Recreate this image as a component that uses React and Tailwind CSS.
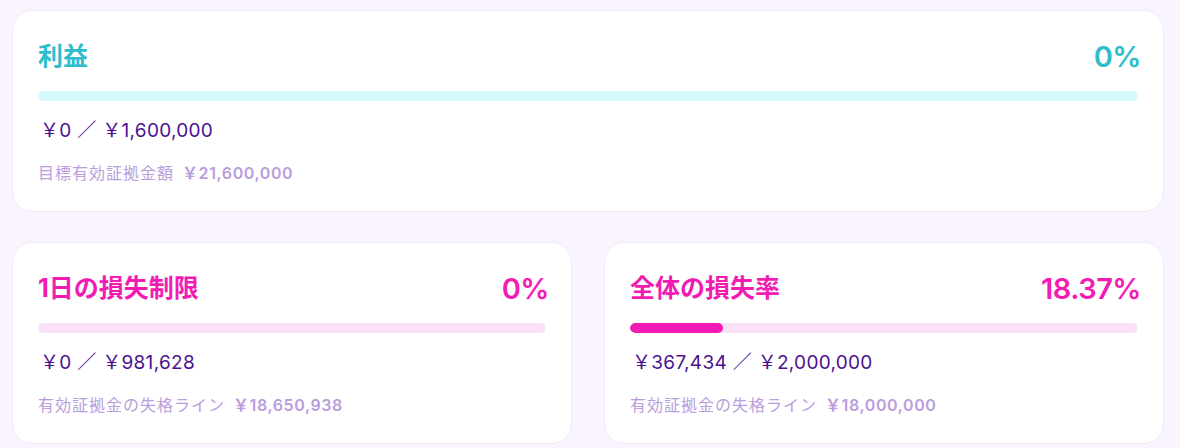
import React from 'react';

const font = { fontFamily: 'Inter, "Noto Sans CJK JP", sans-serif' };

const cards = [
  {
    title: '利益',
    percent: '0%',
    value: 0,
    tone: 'teal',
    amount: '￥0 ／ ￥1,600,000',
    label: '目標有効証拠金額',
    target: '￥21,600,000',
  },
  {
    title: '1日の損失制限',
    percent: '0%',
    value: 0,
    tone: 'pink',
    amount: '￥0 ／ ￥981,628',
    label: '有効証拠金の失格ライン',
    target: '￥18,650,938',
  },
  {
    title: '全体の損失率',
    percent: '18.37%',
    value: 18.37,
    tone: 'pink',
    amount: '￥367,434 ／ ￥2,000,000',
    label: '有効証拠金の失格ライン',
    target: '￥18,000,000',
  },
];

const tones = {
  teal: { text: 'text-[#2dbdcb]', track: 'bg-[#d5f8fb]', fill: 'bg-[#2dbdcb]' },
  pink: { text: 'text-[#f21cb4]', track: 'bg-[#f9e1f6]', fill: 'bg-[#f21cb4]' },
};

const StatCard = ({ card }) => {
  const t = tones[card.tone];
  return (
    <div className="bg-white border border-[#f0e7fa] rounded-[20px] px-[25px] pt-[25px] pb-[26px]">
      {/* header */}
      <div className="flex items-center justify-between h-[42px]">
        <div className={`text-[25px] font-bold ${t.text}`}>{card.title}</div>
        <div className={`text-[29px] font-semibold tracking-[-0.5px] -mr-[3px] ${t.text}`}>{card.percent}</div>
      </div>

      {/* progress */}
      <div className={`mt-[13px] h-[10px] rounded-full overflow-hidden ${t.track}`}>
        <div className={`h-full rounded-full ${t.fill}`} style={{ width: `${card.value}%` }} />
      </div>

      <div className="mt-[16px] h-[28px] flex items-center text-[19px] tracking-[0.3px] text-[#4b1190] pl-[2px]">
        {card.amount}
      </div>
      <div className="mt-[16px] h-[24px] flex items-center text-[16px] text-[#b99ddc]">
        <span className="tracking-[1px]">{card.label}</span>
        <span className="ml-[8px] font-semibold tracking-[0.6px]">{card.target}</span>
      </div>
    </div>
  );
};

const App = () => {
  return (
    <div className="min-h-screen bg-[#faf4fe] pt-[10px] pl-3 pr-4" style={font}>
      <StatCard card={cards[0]} />
      <div className="grid grid-cols-2 gap-8 mt-[30px]">
        <StatCard card={cards[1]} />
        <StatCard card={cards[2]} />
      </div>
    </div>
  );
};

export default App;
